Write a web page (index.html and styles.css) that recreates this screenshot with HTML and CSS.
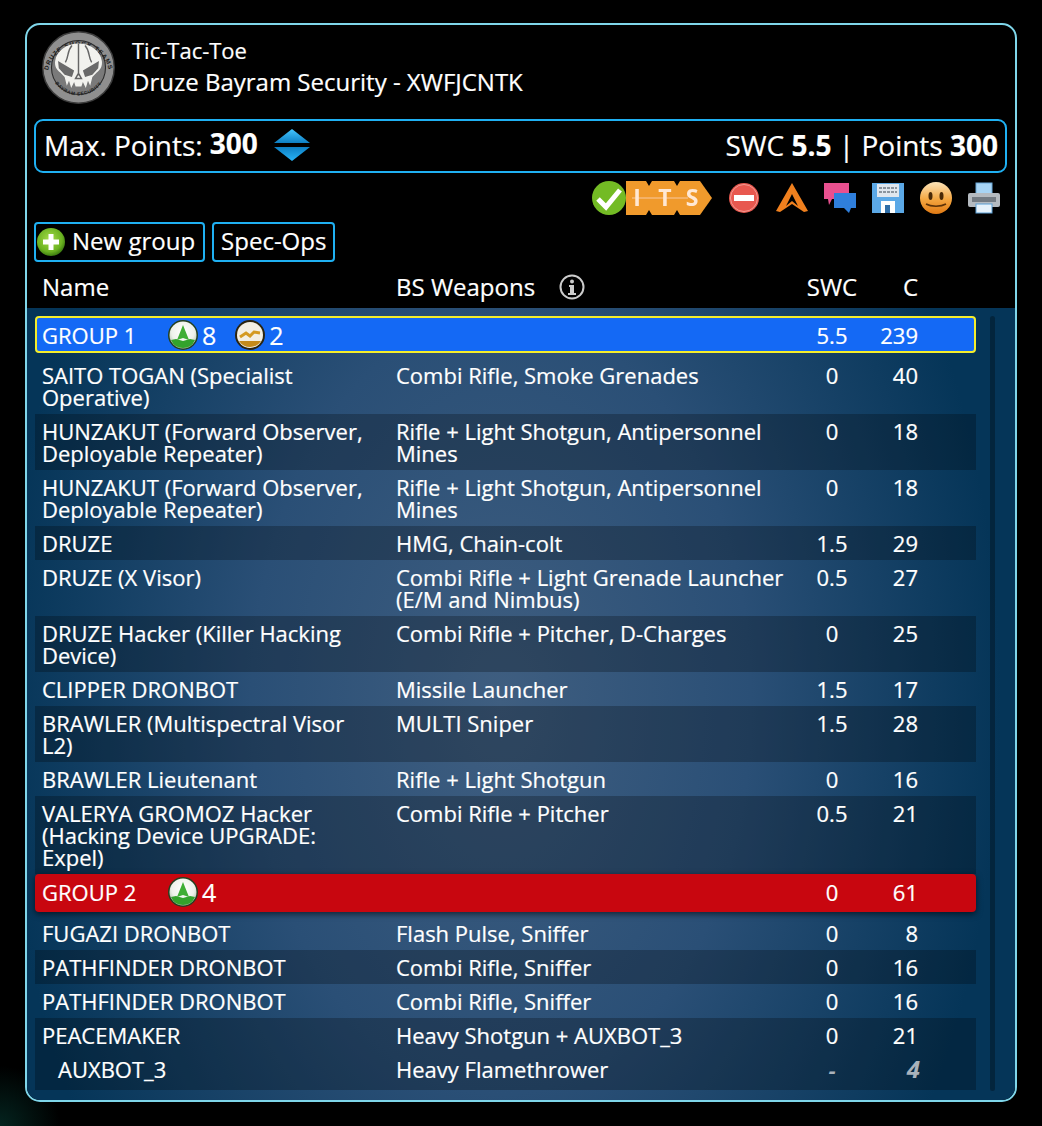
FILE: index.html
```html
<!DOCTYPE html>
<html lang="en">

<head>
    <meta charset="UTF-8">
    <title>Tic-Tac-Toe - Druze Bayram Security</title>
    <link rel="stylesheet" href="styles.css">
</head>

<body>
    <div class="panel">
        <div class="army-head">
            <svg class="logo" viewBox="0 0 100 100">
                <defs>
                    <path id="arc-top" d="M8 56a42.5 42.5 0 0 1 84 0"/>
                    <path id="arc-bottom" d="M17 70a39 39 0 0 0 66 0"/>
                </defs>
                <circle cx="50" cy="50" r="49" fill="#8f8f8f" stroke="#3c3c3c" stroke-width="2"/>
                <circle cx="50" cy="50" r="37" fill="#7a7a7a" stroke="#2c2c2c" stroke-width="1.5"/>
                <text class="logo-text"><textPath href="#arc-top" startOffset="50%" text-anchor="middle">DRUZE SHOCK TEAMS</textPath></text>
                <text class="logo-text small"><textPath href="#arc-bottom" startOffset="50%" text-anchor="middle">BAYRAM SECURITY</textPath></text>
                <path d="M50 17C34 17 20 27 18 41c-1 7 2 12 7 16l6 6 3 12 3-7 3 10 4-8 2 6h8l2-6 4 8 3-10 3 7 3-12 6-6c5-4 8-9 7-16C80 27 66 17 50 17z" fill="#f2f2ee"/>
                <path d="M22 41l22 13-3 9-10-3-8-9zM78 41L56 54l3 9 10-3 8-9z" fill="#6a6a6a"/>
                <path d="M50 17v44M41 20c-7 8-4 15-9 23M59 20c7 8 4 15 9 23M46 65l4-7 4 7z" stroke="#666" stroke-width="2" fill="none"/>
            </svg>
            <div class="army-title">
                <div class="game-name">Tic-Tac-Toe</div>
                <div class="army-name">Druze Bayram Security - XWFJCNTK</div>
            </div>
        </div>

        <div class="points-bar">
            <div class="max-points">
                <span>Max. Points:</span>
                <b>300</b>
                <svg class="spinner" viewBox="0 0 36 34">
                    <defs>
                        <linearGradient id="spin-up" x1="0" y1="0" x2="0" y2="1"><stop offset="0" stop-color="#45c6ff"/><stop offset="1" stop-color="#0d7fc4"/></linearGradient>
                        <linearGradient id="spin-down" x1="0" y1="0" x2="0" y2="1"><stop offset="0" stop-color="#0d7fc4"/><stop offset="1" stop-color="#29b4f6"/></linearGradient>
                    </defs>
                    <path d="M18 1l18 14H0z" fill="url(#spin-up)"/>
                    <path d="M0 19h36L18 33z" fill="url(#spin-down)"/>
                </svg>
            </div>
            <div class="totals">SWC <b>5.5</b> | Points <b>300</b></div>
        </div>

        <div class="tools">
            <div class="its-badge">
                <svg class="its-hex" viewBox="0 0 86 34">
                    <path d="M0 0h74l12 17-12 17H0z" fill="#f09a2c"/>
                    <path d="M20 0l3 5 3-5zM20 34l3-5 3 5zM48 0l3 5 3-5zM48 34l3-5 3 5z" fill="#000"/>
                    <path d="M6 17h56" stroke="#f9c9a0" stroke-width="1"/>
                    <text class="its-letter" x="11" y="25">I</text>
                    <text class="its-letter" x="39" y="25">T</text>
                    <text class="its-letter" x="66" y="25">S</text>
                </svg>
                <svg class="its-check" viewBox="0 0 34 34">
                    <circle cx="17" cy="17" r="17" fill="#73bb24"/>
                    <path d="M6 18l8 8L28 9" fill="none" stroke="#fff" stroke-width="5"/>
                </svg>
            </div>
            <svg class="tool" viewBox="0 0 32 32">
                <circle cx="16" cy="16" r="15" fill="#e8584f"/>
                <circle cx="16" cy="16" r="13.5" fill="none" stroke="#f29a92" stroke-width="1"/>
                <rect x="6" y="13" width="20" height="6" fill="#fff"/>
            </svg>
            <svg class="tool" viewBox="0 0 32 32">
                <path d="M16 1l16 28-4 1-12-8-12 8-4-1z" fill="#f0801e"/>
                <path d="M16 12l6 12-6-5-6 5z" fill="#000"/>
            </svg>
            <svg class="tool" viewBox="0 0 32 32">
                <path d="M0 1h25v16H8l-3 6-1-6H0z" fill="#e8508f"/>
                <path d="M10 11h22v15h-5l-2 5-5-5H10z" fill="#2f7fdc"/>
            </svg>
            <svg class="tool" viewBox="0 0 32 32">
                <rect width="32" height="30" y="1" fill="#5ba8e6"/>
                <rect x="5" y="2" width="22" height="13" fill="#dfe6ee"/>
                <path d="M7 6h18M7 10h18" stroke="#8a949e" stroke-width="2" stroke-dasharray="3 1"/>
                <rect x="9" y="19" width="14" height="12" fill="#fff"/>
                <rect x="13" y="23" width="5" height="8" fill="#2f6ea8"/>
            </svg>
            <svg class="tool" viewBox="0 0 32 32">
                <defs>
                    <linearGradient id="smile" x1="0" y1="0" x2="0" y2="1"><stop offset="0" stop-color="#fbe3b8"/><stop offset=".55" stop-color="#f4a640"/><stop offset="1" stop-color="#e07a14"/></linearGradient>
                </defs>
                <circle cx="16" cy="16" r="16" fill="url(#smile)"/>
                <ellipse cx="10.5" cy="14" rx="2" ry="4" fill="#4a2a08"/>
                <ellipse cx="21.5" cy="14" rx="2" ry="4" fill="#4a2a08"/>
                <path d="M6 22c5 3 15 3 20 0" fill="none" stroke="#5c3208" stroke-width="1.5"/>
            </svg>
            <svg class="tool" viewBox="0 0 32 32">
                <rect x="8" y="1" width="16" height="12" fill="#a8d4f4" stroke="#6aa8d8"/>
                <rect x="0" y="11" width="32" height="14" rx="2" fill="#b4bac0"/>
                <rect x="4" y="15" width="24" height="5" fill="#737b83"/>
                <rect x="8" y="22" width="16" height="9" fill="#e6f2fb" stroke="#5a9ed4"/>
            </svg>
        </div>

        <div class="group-actions">
            <button class="btn btn-new">
                <svg class="plus" viewBox="0 0 28 28">
                    <defs>
                        <radialGradient id="plus-bg" cx=".45" cy=".4" r=".6"><stop offset="0" stop-color="#a6dc4a"/><stop offset=".75" stop-color="#6bb221"/><stop offset="1" stop-color="#3d7d10"/></radialGradient>
                    </defs>
                    <circle cx="14" cy="14" r="14" fill="url(#plus-bg)"/>
                    <path d="M14 6v16M6 14h16" stroke="#fff" stroke-width="5"/>
                </svg>
                <span>New group</span>
            </button>
            <button class="btn"><span>Spec-Ops</span></button>
        </div>

        <div class="cols cols-head">
            <div>Name</div>
            <div class="weapons-head">BS Weapons
                <svg class="info" viewBox="0 0 26 26">
                    <circle cx="13" cy="13" r="11.5" fill="none" stroke="#ccc" stroke-width="2"/>
                    <circle cx="13" cy="7.5" r="2" fill="#ccc"/>
                    <path d="M10 11h5v8h2v2H9v-2h2v-6h-1z" fill="#ccc"/>
                </svg>
            </div>
            <div class="swc">SWC</div>
            <div class="cost">C</div>
        </div>

        <div class="list-area">
            <div class="list">
                <div class="cols group group-blue">
                    <div class="group-name">
                        <span class="group-title">GROUP 1</span>
                        <svg class="order-icon" viewBox="0 0 30 30"><use href="#order-regular"/></svg><span class="order-count">8</span>
                        <svg class="order-icon second" viewBox="0 0 30 30">
                            <circle cx="15" cy="15" r="15" fill="#2b2410"/>
                            <circle cx="15" cy="15" r="13" fill="#f3efe4"/>
                            <path d="M4 21a13 13 0 0 0 22 0z" fill="#c48a1c"/>
                            <path d="M5 17l6-4 4 3 4-4 6 1" fill="none" stroke="#d49a22" stroke-width="3"/>
                        </svg><span class="order-count">2</span>
                    </div>
                    <div></div>
                    <div class="swc">5.5</div>
                    <div class="cost">239</div>
                </div>

                <div class="cols row">
                    <div>SAITO TOGAN (Specialist Operative)</div>
                    <div>Combi Rifle, Smoke Grenades</div>
                    <div class="swc">0</div>
                    <div class="cost">40</div>
                </div>
                <div class="cols row alt">
                    <div>HUNZAKUT (Forward Observer, Deployable Repeater)</div>
                    <div>Rifle + Light Shotgun, Antipersonnel Mines</div>
                    <div class="swc">0</div>
                    <div class="cost">18</div>
                </div>
                <div class="cols row">
                    <div>HUNZAKUT (Forward Observer, Deployable Repeater)</div>
                    <div>Rifle + Light Shotgun, Antipersonnel Mines</div>
                    <div class="swc">0</div>
                    <div class="cost">18</div>
                </div>
                <div class="cols row alt">
                    <div>DRUZE</div>
                    <div>HMG, Chain-colt</div>
                    <div class="swc">1.5</div>
                    <div class="cost">29</div>
                </div>
                <div class="cols row">
                    <div>DRUZE (X Visor)</div>
                    <div>Combi Rifle + Light Grenade Launcher (E/M and Nimbus)</div>
                    <div class="swc">0.5</div>
                    <div class="cost">27</div>
                </div>
                <div class="cols row alt">
                    <div>DRUZE Hacker (Killer Hacking Device)</div>
                    <div>Combi Rifle + Pitcher, D-Charges</div>
                    <div class="swc">0</div>
                    <div class="cost">25</div>
                </div>
                <div class="cols row">
                    <div>CLIPPER DRONBOT</div>
                    <div>Missile Launcher</div>
                    <div class="swc">1.5</div>
                    <div class="cost">17</div>
                </div>
                <div class="cols row alt">
                    <div>BRAWLER (Multispectral Visor L2)</div>
                    <div>MULTI Sniper</div>
                    <div class="swc">1.5</div>
                    <div class="cost">28</div>
                </div>
                <div class="cols row">
                    <div>BRAWLER Lieutenant</div>
                    <div>Rifle + Light Shotgun</div>
                    <div class="swc">0</div>
                    <div class="cost">16</div>
                </div>
                <div class="cols row alt">
                    <div>VALERYA GROMOZ Hacker (Hacking Device UPGRADE: Expel)</div>
                    <div>Combi Rifle + Pitcher</div>
                    <div class="swc">0.5</div>
                    <div class="cost">21</div>
                </div>

                <div class="cols group group-red">
                    <div class="group-name">
                        <span class="group-title">GROUP 2</span>
                        <svg class="order-icon" viewBox="0 0 30 30"><use href="#order-regular"/></svg><span class="order-count">4</span>
                    </div>
                    <div></div>
                    <div class="swc">0</div>
                    <div class="cost">61</div>
                </div>

                <div class="cols row">
                    <div>FUGAZI DRONBOT</div>
                    <div>Flash Pulse, Sniffer</div>
                    <div class="swc">0</div>
                    <div class="cost">8</div>
                </div>
                <div class="cols row alt">
                    <div>PATHFINDER DRONBOT</div>
                    <div>Combi Rifle, Sniffer</div>
                    <div class="swc">0</div>
                    <div class="cost">16</div>
                </div>
                <div class="cols row">
                    <div>PATHFINDER DRONBOT</div>
                    <div>Combi Rifle, Sniffer</div>
                    <div class="swc">0</div>
                    <div class="cost">16</div>
                </div>
                <div class="cols row alt">
                    <div>PEACEMAKER</div>
                    <div>Heavy Shotgun + AUXBOT_3</div>
                    <div class="swc">0</div>
                    <div class="cost">21</div>
                </div>
                <div class="cols row alt aux">
                    <div class="aux-name">AUXBOT_3</div>
                    <div>Heavy Flamethrower</div>
                    <div class="swc muted">-</div>
                    <div class="cost muted muted-cost">4</div>
                </div>
            </div>
            <div class="scroll-track"></div>
        </div>
    </div>

    <svg class="defs-only">
        <defs>
            <radialGradient id="order-bg" cx=".5" cy=".38" r=".6"><stop offset="0" stop-color="#fff"/><stop offset=".7" stop-color="#eef2ea"/><stop offset="1" stop-color="#b9c8b4"/></radialGradient>
        </defs>
        <symbol id="order-regular" viewBox="0 0 30 30">
            <circle cx="15" cy="15" r="15" fill="#24401f"/>
            <circle cx="15" cy="15" r="13.5" fill="url(#order-bg)"/>
            <path d="M3 20a13 13 0 0 0 24 0l-5-1-7 2-7-2z" fill="#33a32c"/>
            <path d="M15 5l6 15-6-2-6 2z" fill="#3fae35"/>
        </symbol>
    </svg>
</body>

</html>
```

FILE: styles.css
```css
html,
body {
    height: 100%;
}

body {
    margin: 0;
    padding: 23px 25px 0;
    box-sizing: border-box;
    overflow: hidden;
    background: radial-gradient(circle at 0 1126px, #04241f, #000 60px);
    color: #fff;
    font-family: "Open Sans", Arial, sans-serif;
    font-size: 22px;
    -webkit-text-stroke: 0.2px #fff;
}

.panel {
    height: 1079px;
    box-sizing: border-box;
    border: 2px solid #7fd6ea;
    border-radius: 15px;
    overflow: hidden;
    background: #000;
    display: flex;
    flex-direction: column;
}

.army-head {
    display: flex;
    align-items: center;
    gap: 17px;
    padding: 5px 15px 0;
}

.logo {
    width: 73px;
    height: 75px;
    flex: none;
}

.logo-text {
    font-family: "Liberation Sans", Arial, sans-serif;
    font-size: 8.5px;
    font-weight: bold;
    fill: #1c1c1c;
    letter-spacing: 1.3px;
    -webkit-text-stroke: 0;
}

.logo-text.small {
    font-size: 6.5px;
    letter-spacing: 0.8px;
}

.army-title {
    padding-bottom: 3px;
}

.game-name {
    font-size: 22px;
    line-height: 30px;
}

.army-name {
    font-size: 24px;
    line-height: 33px;
}

.points-bar {
    margin: 14px 8px 0 7px;
    height: 54px;
    box-sizing: border-box;
    border: 2px solid #1fb0f2;
    border-radius: 9px;
    padding: 0 7px 2px 8px;
    display: flex;
    align-items: center;
    justify-content: space-between;
    font-size: 28px;
}

.max-points {
    display: flex;
    align-items: center;
    gap: 7px;
}

.max-points b {
    margin-top: -5px;
}

.spinner {
    width: 36px;
    height: 34px;
    margin-left: 9px;
}

.tools {
    display: flex;
    justify-content: flex-end;
    align-items: center;
    gap: 16px;
    padding: 7px 15px 0;
    height: 36px;
}

.tool {
    width: 32px;
    height: 32px;
    filter: blur(0.4px);
}

.its-badge {
    position: relative;
    width: 120px;
    height: 34px;
    filter: blur(0.4px);
}

.its-hex {
    position: absolute;
    right: 0;
    top: 0;
    width: 86px;
    height: 34px;
}

.its-check {
    position: absolute;
    left: 0;
    top: 0;
    width: 34px;
    height: 34px;
}

.its-letter {
    font-size: 23px;
    font-weight: bold;
    fill: #ffe8d4;
    text-anchor: middle;
    -webkit-text-stroke: 0;
}

.group-actions {
    display: flex;
    gap: 7px;
    padding: 6px 8px 0 7px;
}

.btn {
    height: 40px;
    box-sizing: border-box;
    border: 2px solid #1fb0f2;
    border-radius: 4px;
    background: #000;
    color: #fff;
    font-family: inherit;
    font-size: 24px;
    -webkit-text-stroke: 0.2px #fff;
    padding: 0 7px;
    display: flex;
    align-items: center;
    gap: 7px;
}

.btn span {
    margin-top: -3px;
}

.btn-new {
    padding: 0 8px 0 1px;
}

.plus {
    width: 28px;
    height: 28px;
}

.cols {
    display: grid;
    grid-template-columns: 361px 400px 72px 50px;
}

.cols-head {
    grid-template-columns: 354px 400px 72px 50px;
    height: 46px;
    box-sizing: border-box;
    padding: 3px 0 0 15px;
    align-items: center;
    font-size: 24px;
}

.weapons-head {
    display: flex;
    align-items: center;
    gap: 24px;
}

.info {
    width: 26px;
    height: 26px;
}

.swc {
    text-align: center;
}

.cost {
    text-align: right;
}

.list-area {
    flex: 1;
    display: flex;
    background: radial-gradient(ellipse 500px 780px at 48% 50%, #3f5e80, #2a4f76 50%, #053558 100%);
    padding: 8px 0 9px 8px;
}

.list {
    width: 941px;
    flex: none;
}

.scroll-track {
    width: 5px;
    margin-left: 14px;
    border-radius: 3px;
    background: rgba(0, 0, 0, 0.3);
}

.group {
    height: 38px;
    box-sizing: border-box;
    align-items: center;
    padding: 0 0 2px 7px;
    border-radius: 4px;
    grid-template-columns: 354px 400px 72px 50px;
}

.group-blue {
    height: 37px;
    margin-bottom: 5px;
    padding: 0 0 2px 5px;
    border: 2px solid #f5ee2a;
    background: #1469f5;
}

.group-red {
    margin-bottom: 4px;
    background: #c8060f;
    box-shadow: 0 2px 6px rgba(0, 0, 0, 0.6);
}

.group-name {
    display: flex;
    align-items: center;
}

.group-title {
    width: 126px;
}

.order-icon {
    width: 30px;
    height: 30px;
    flex: none;
}

.order-icon.second {
    margin-left: 19px;
}

.order-count {
    margin-left: 4px;
    font-size: 25px;
}

.row {
    padding: 6px 0;
    line-height: 22px;
}

.row > div:first-child {
    padding: 0 30px 0 7px;
}

.row.alt {
    background: rgba(0, 0, 0, 0.25);
}

.row > div:nth-child(2) {
    padding-right: 4px;
}

.aux {
    padding-bottom: 10px;
}

.row > .aux-name:first-child {
    padding-left: 23px;
}

.muted {
    color: #a9b2bb;
    font-style: italic;
    font-weight: bold;
    -webkit-text-stroke: 0;
}

.muted-cost {
    font-size: 24px;
    transform: translateX(2px);
}

.defs-only {
    position: absolute;
    width: 0;
    height: 0;
}
```
